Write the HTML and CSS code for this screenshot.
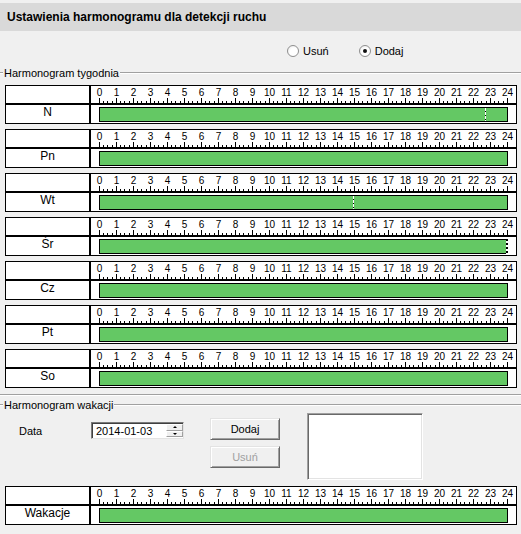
FILE: index.html
```html
<!DOCTYPE html>
<html lang="pl">
<head>
<meta charset="utf-8">
<title>Ustawienia harmonogramu dla detekcji ruchu</title>
<link rel="stylesheet" href="styles.css">
</head>
<body>
<div class="header">Ustawienia harmonogramu dla detekcji ruchu</div>

<div class="mode">
  <label class="radio"><span class="dot"></span><span>Usuń</span></label>
  <label class="radio"><span class="dot on"></span><span>Dodaj</span></label>
</div>

<div class="group week">
  <div class="gtitle"><span>Harmonogram tygodnia</span></div>

  <div class="sched">
    <div class="cell"></div>
    <div class="cell ruler">
      <div class="nums"><span>0</span><span>1</span><span>2</span><span>3</span><span>4</span><span>5</span><span>6</span><span>7</span><span>8</span><span>9</span><span>10</span><span>11</span><span>12</span><span>13</span><span>14</span><span>15</span><span>16</span><span>17</span><span>18</span><span>19</span><span>20</span><span>21</span><span>22</span><span>23</span><span>24</span></div>
      <div class="ticks"></div>
    </div>
    <div class="cell name">N</div>
    <div class="cell track"><div class="bar"><i class="mark" style="left:385px"></i></div></div>
  </div>

  <div class="sched">
    <div class="cell"></div>
    <div class="cell ruler">
      <div class="nums"><span>0</span><span>1</span><span>2</span><span>3</span><span>4</span><span>5</span><span>6</span><span>7</span><span>8</span><span>9</span><span>10</span><span>11</span><span>12</span><span>13</span><span>14</span><span>15</span><span>16</span><span>17</span><span>18</span><span>19</span><span>20</span><span>21</span><span>22</span><span>23</span><span>24</span></div>
      <div class="ticks"></div>
    </div>
    <div class="cell name">Pn</div>
    <div class="cell track"><div class="bar"></div></div>
  </div>

  <div class="sched">
    <div class="cell"></div>
    <div class="cell ruler">
      <div class="nums"><span>0</span><span>1</span><span>2</span><span>3</span><span>4</span><span>5</span><span>6</span><span>7</span><span>8</span><span>9</span><span>10</span><span>11</span><span>12</span><span>13</span><span>14</span><span>15</span><span>16</span><span>17</span><span>18</span><span>19</span><span>20</span><span>21</span><span>22</span><span>23</span><span>24</span></div>
      <div class="ticks"></div>
    </div>
    <div class="cell name">Wt</div>
    <div class="cell track"><div class="bar"><i class="mark" style="left:253px"></i></div></div>
  </div>

  <div class="sched">
    <div class="cell"></div>
    <div class="cell ruler">
      <div class="nums"><span>0</span><span>1</span><span>2</span><span>3</span><span>4</span><span>5</span><span>6</span><span>7</span><span>8</span><span>9</span><span>10</span><span>11</span><span>12</span><span>13</span><span>14</span><span>15</span><span>16</span><span>17</span><span>18</span><span>19</span><span>20</span><span>21</span><span>22</span><span>23</span><span>24</span></div>
      <div class="ticks"></div>
    </div>
    <div class="cell name">Śr</div>
    <div class="cell track"><div class="bar"><i class="mark end" style="left:406px"></i></div></div>
  </div>

  <div class="sched">
    <div class="cell"></div>
    <div class="cell ruler">
      <div class="nums"><span>0</span><span>1</span><span>2</span><span>3</span><span>4</span><span>5</span><span>6</span><span>7</span><span>8</span><span>9</span><span>10</span><span>11</span><span>12</span><span>13</span><span>14</span><span>15</span><span>16</span><span>17</span><span>18</span><span>19</span><span>20</span><span>21</span><span>22</span><span>23</span><span>24</span></div>
      <div class="ticks"></div>
    </div>
    <div class="cell name">Cz</div>
    <div class="cell track"><div class="bar"></div></div>
  </div>

  <div class="sched">
    <div class="cell"></div>
    <div class="cell ruler">
      <div class="nums"><span>0</span><span>1</span><span>2</span><span>3</span><span>4</span><span>5</span><span>6</span><span>7</span><span>8</span><span>9</span><span>10</span><span>11</span><span>12</span><span>13</span><span>14</span><span>15</span><span>16</span><span>17</span><span>18</span><span>19</span><span>20</span><span>21</span><span>22</span><span>23</span><span>24</span></div>
      <div class="ticks"></div>
    </div>
    <div class="cell name">Pt</div>
    <div class="cell track"><div class="bar"></div></div>
  </div>

  <div class="sched">
    <div class="cell"></div>
    <div class="cell ruler">
      <div class="nums"><span>0</span><span>1</span><span>2</span><span>3</span><span>4</span><span>5</span><span>6</span><span>7</span><span>8</span><span>9</span><span>10</span><span>11</span><span>12</span><span>13</span><span>14</span><span>15</span><span>16</span><span>17</span><span>18</span><span>19</span><span>20</span><span>21</span><span>22</span><span>23</span><span>24</span></div>
      <div class="ticks"></div>
    </div>
    <div class="cell name">So</div>
    <div class="cell track"><div class="bar"></div></div>
  </div>
</div>

<div class="group holiday">
  <div class="gtitle"><span>Harmonogram wakacji</span></div>

  <div class="hform">
    <div class="dlabel">Data</div>
    <div class="date">
      <span class="dval">2014-01-03</span>
      <span class="spin"><span class="up"></span><span class="down"></span></span>
    </div>
    <div class="btns">
      <button class="btn" type="button">Dodaj</button>
      <button class="btn" type="button" disabled>Usuń</button>
    </div>
    <div class="list"></div>
  </div>

  <div class="sched">
    <div class="cell"></div>
    <div class="cell ruler">
      <div class="nums"><span>0</span><span>1</span><span>2</span><span>3</span><span>4</span><span>5</span><span>6</span><span>7</span><span>8</span><span>9</span><span>10</span><span>11</span><span>12</span><span>13</span><span>14</span><span>15</span><span>16</span><span>17</span><span>18</span><span>19</span><span>20</span><span>21</span><span>22</span><span>23</span><span>24</span></div>
      <div class="ticks"></div>
    </div>
    <div class="cell name">Wakacje</div>
    <div class="cell track"><div class="bar"></div></div>
  </div>
</div>
</body>
</html>
```

FILE: styles.css
```css
html, body {
  margin: 0;
  padding: 0;
  background: #f0f0f0;
}
body {
  width: 521px;
  height: 534px;
  overflow: hidden;
  font-family: "Liberation Sans", Arial, sans-serif;
  font-size: 11px;
  color: #000;
}

.header {
  margin-top: 3px;
  height: 28px;
  line-height: 28px;
  padding-left: 7px;
  background: #d9d9d9;
  font-size: 12px;
  font-weight: bold;
}

.mode {
  height: 36px;
  box-sizing: border-box;
  padding: 4px 0 0 287px;
  display: flex;
  align-items: center;
  gap: 30px;
}
.radio {
  display: flex;
  align-items: center;
  gap: 4px;
  line-height: 13px;
}
.dot {
  width: 12px;
  height: 12px;
  box-sizing: border-box;
  border-radius: 50%;
  border: 1px solid #8f8f8f;
  background: radial-gradient(circle at 60% 60%, #ffffff 0 45%, #e6e6e6 100%);
  display: flex;
  align-items: center;
  justify-content: center;
}
.dot.on::after {
  content: "";
  width: 4px;
  height: 4px;
  border-radius: 50%;
  background: #111;
}

.gtitle {
  display: flex;
  align-items: center;
  height: 12px;
  line-height: 12px;
}
.gtitle::before,
.gtitle::after {
  content: "";
  height: 0;
  border-top: 1px solid #a0a0a0;
  border-bottom: 1px solid #ffffff;
}
.gtitle::before {
  width: 3px;
}
.gtitle::after {
  flex: 1;
}
.gtitle span {
  padding: 0 1px;
}

.week {
  padding-bottom: 1px;
  border-bottom: 1px solid #a0a0a0;
  box-shadow: 0 1px 0 #ffffff;
}
.week .gtitle {
  margin-bottom: 6px;
}

.holiday {
  margin-top: 4px;
}

.sched {
  display: grid;
  grid-template-columns: 83px 425px;
  grid-template-rows: 17px 18px;
  gap: 2px;
  width: 512px;
  box-sizing: border-box;
  margin: 0 0 5px 5px;
  border: 1px solid #000;
  background: #000;
}
.cell {
  background: #fff;
}
.nums {
  display: flex;
  height: 12px;
  font-size: 10px;
  line-height: 13px;
}
.nums span {
  flex: 0 0 17px;
  text-align: center;
}
.ticks {
  margin-left: 8px;
  width: 409px;
  height: 5px;
  background:
    repeating-linear-gradient(to right, #000 0 1px, transparent 1px 17px) 0 0 / 409px 5px no-repeat,
    repeating-linear-gradient(to right, transparent 0 4px, #000 4px 5px, transparent 5px 8px, #000 8px 9px, transparent 9px 13px, #000 13px 14px, transparent 14px 17px) 0 100% / 408px 2px no-repeat;
}
.name {
  font-size: 12px;
  line-height: 15px;
  text-align: center;
}
.track {
  padding: 2px 0 0 8px;
}
.bar {
  position: relative;
  width: 407px;
  height: 13px;
  background: #64c864;
  border: 1px solid #000;
}
.mark {
  position: absolute;
  top: 0;
  bottom: 0;
  width: 1px;
  background: repeating-linear-gradient(to bottom, #fff 0 3px, #000 3px 4px);
}
.mark.end {
  top: -1px;
  bottom: -1px;
  width: 2px;
  background: repeating-linear-gradient(to bottom, #000 0 2px, #fff 2px 4px);
}

.hform {
  display: flex;
  align-items: flex-start;
  height: 75px;
  box-sizing: border-box;
  padding-left: 19px;
}
.dlabel {
  width: 72px;
  margin-top: 14px;
  line-height: 13px;
}
.date {
  margin-top: 11px;
  width: 93px;
  height: 17px;
  box-sizing: border-box;
  display: flex;
  background: #fff;
  border: 1px solid;
  border-color: #7a7a7a #e3e3e3 #e3e3e3 #7a7a7a;
  box-shadow: inset 1px 1px 0 #404040;
}
.dval {
  flex: 1;
  padding: 1px 0 0 4px;
  line-height: 14px;
}
.spin {
  width: 17px;
  display: flex;
  flex-direction: column;
  padding: 1px 0 1px 0;
  box-sizing: border-box;
}
.spin span {
  flex: 1;
  display: flex;
  align-items: center;
  justify-content: center;
  background: #f0f0f0;
  border: 1px solid;
  border-color: #fff #a0a0a0 #a0a0a0 #fff;
}
.up::after,
.down::after {
  content: "";
  width: 0;
  height: 0;
  border-left: 2px solid transparent;
  border-right: 2px solid transparent;
}
.up::after {
  border-bottom: 2px solid #000;
}
.down::after {
  border-top: 2px solid #000;
}

.btns {
  margin: 7px 0 0 26px;
  display: flex;
  flex-direction: column;
  gap: 6px;
}
.btn {
  width: 70px;
  height: 22px;
  margin: 0;
  padding: 0;
  font: 11px "Liberation Sans", Arial, sans-serif;
  color: #000;
  background: #f0f0f0;
  border: 1px solid;
  border-color: #e3e3e3 #696969 #696969 #e3e3e3;
  box-shadow: inset 1px 1px 0 #fff, inset -1px -1px 0 #a0a0a0;
}
.btn:disabled {
  color: #a0a0a0;
}

.list {
  margin: 2px 0 0 27px;
  width: 116px;
  height: 67px;
  box-sizing: border-box;
  background: #fff;
  border: 1px solid;
  border-color: #a0a0a0 #fff #fff #a0a0a0;
  box-shadow: inset 1px 1px 0 #696969, inset -1px -1px 0 #e3e3e3;
}
```
